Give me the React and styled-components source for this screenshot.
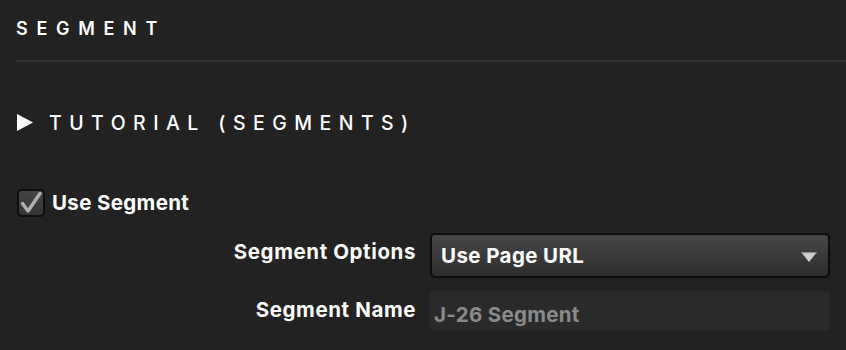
import React from "react";
import styled, { createGlobalStyle } from "styled-components";

const Global = createGlobalStyle`
  html, body { margin: 0; padding: 0; background: #222222; }
  body { font-family: Inter, "DejaVu Sans", sans-serif; color: #fff; }
  * { box-sizing: border-box; }
`;

const Page = styled.div`
  width: 846px;
  height: 350px;
  overflow: hidden;
  padding: 18px 0 0 16px;
  background: #222222;
`;

const Title = styled.h1`
  margin: 0;
  font-size: 18px;
  line-height: 21px;
  font-weight: 600;
  letter-spacing: 8.7px;
  color: #ffffff;
`;

const Divider = styled.hr`
  margin: 21px 0 0 0;
  border: 0;
  height: 2px;
  background: #333333;
`;

const Disclosure = styled.div`
  margin-top: 49px;
  display: flex;
  align-items: center;
  gap: 16px;
  padding-left: 1px;
`;

const DisclosureText = styled.span`
  font-size: 19.5px;
  line-height: 22px;
  font-weight: 500;
  letter-spacing: 7.45px;
  color: #ffffff;
  padding-top: 1px;
`;

const CheckRow = styled.label`
  margin-top: 55px;
  display: flex;
  align-items: center;
  gap: 7px;
  padding-left: 1px;
`;

const Box = styled.span`
  width: 28px;
  height: 28px;
  border: 2px solid #0e0e0e;
  border-radius: 5px;
  background: linear-gradient(#454545, #333333);
  display: flex;
  align-items: center;
  justify-content: center;
`;

const CheckText = styled.span`
  font-size: 20.5px;
  line-height: 22px;
  font-weight: 700;
  letter-spacing: 0.35px;
  color: #ffffff;
  padding-bottom: 1px;
`;

const Form = styled.div`
  margin-top: 16px;
  display: grid;
  grid-template-columns: 400px 400px;
  column-gap: 14px;
  row-gap: 13px;
`;

const Label = styled.div`
  text-align: right;
  font-size: 20.5px;
  line-height: 22px;
  font-weight: 700;
  letter-spacing: 0.6px;
  color: #ffffff;
  padding-top: ${(p) => p.$top}px;
`;

const Select = styled.div`
  height: 45px;
  border: 2px solid #0c0c0c;
  border-radius: 5px;
  background: linear-gradient(#474747, #2d2d2d);
  padding: 10px 0 0 9px;
  font-size: 20.5px;
  line-height: 22px;
  font-weight: 700;
  letter-spacing: 0.4px;
  color: #ffffff;
  display: flex;
  justify-content: space-between;
`;

const Arrow = styled.svg`
  margin: 7px 11px 0 0;
`;

const Input = styled.input`
  height: 40px;
  width: 400px;
  border: 0;
  outline: none;
  border-radius: 4px;
  background: #2a2a2a;
  padding: 12px 4px 6px 4px;
  font-family: Inter, "DejaVu Sans", sans-serif;
  font-size: 20.5px;
  line-height: 22px;
  font-weight: 700;
  letter-spacing: 0.3px;
  color: #ffffff;
  &::placeholder { color: #8a8a8a; opacity: 1; }
`;

export default function App() {
  return (
    <>
      <Global />
      <Page>
        <Title>SEGMENT</Title>
        <Divider />
        <Disclosure>
          <svg width="16" height="17" viewBox="0 0 16 17">
            <polygon points="0,0 16,8.5 0,17" fill="#ffffff" />
          </svg>
          <DisclosureText>TUTORIAL (SEGMENTS)</DisclosureText>
        </Disclosure>
        <CheckRow>
          <Box>
            <svg width="24" height="24" viewBox="0 0 24 24">
              <path d="M3.5 12.5 L9 20 L21 2.5" fill="none" stroke="#b0b0b0" strokeWidth="3.4" strokeLinecap="round" strokeLinejoin="round" />
            </svg>
          </Box>
          <CheckText>Use Segment</CheckText>
        </CheckRow>
        <Form>
          <Label $top={8}>Segment Options</Label>
          <Select>
            <span>Use Page URL</span>
            <Arrow width="16" height="10" viewBox="0 0 16 10">
              <polygon points="0,0 16,0 8,10" fill="#cfcfcf" />
              <rect x="0" y="0" width="16" height="1.2" fill="#8a8a8a" />
            </Arrow>
          </Select>
          <Label $top={8}>Segment Name</Label>
          <Input placeholder="J-26 Segment" />
        </Form>
      </Page>
    </>
  );
}
